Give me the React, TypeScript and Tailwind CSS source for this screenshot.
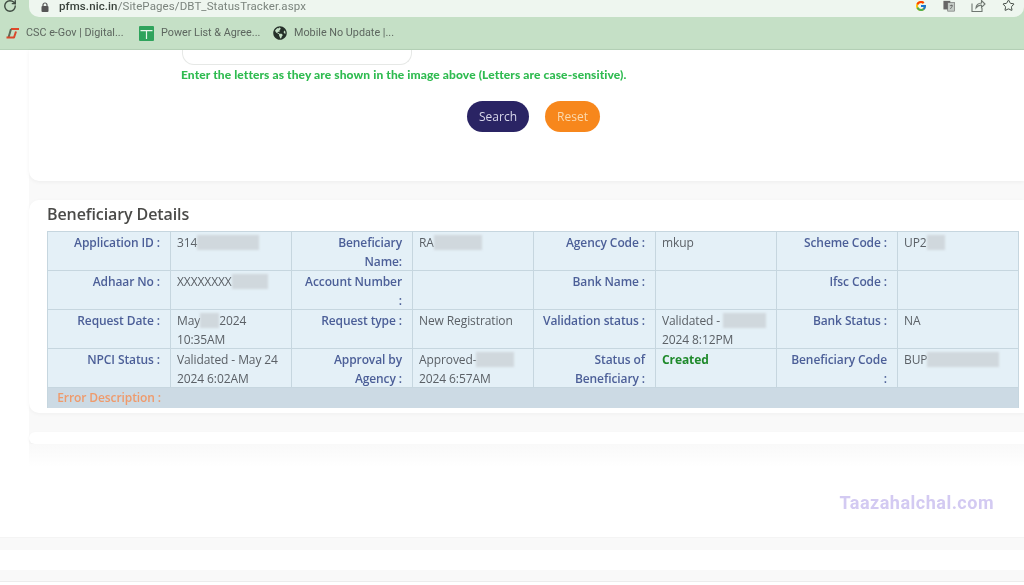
import React from "react";
import { RotateCw, Star } from "lucide-react";
import { FcGoogle } from "react-icons/fc";
import { FaGlobeAmericas } from "react-icons/fa";

const Blur = ({ w, tone = "bg-[#d0d8dd]" }: { w: string; tone?: string }) => (
  <span className={`inline-block h-[15px] align-[-3px] blur-[1px] ${w} ${tone}`} />
);

const Label = ({ children }: { children: React.ReactNode }) => (
  <div className="whitespace-nowrap border-r border-b border-[#c6d6df] bg-[#e4f0f7] pr-[10px] pt-[1px] text-right font-semibold text-[#4c5f98]">
    {children}
  </div>
);

const Value = ({ children, last }: { children?: React.ReactNode; last?: boolean }) => (
  <div className={`border-b border-[#c6d6df] bg-[#e4f0f7] pl-[6px] pt-[1px] text-[#5b6066] ${last ? "" : "border-r"}`}>
    {children}
  </div>
);

export default function App() {
  return (
    <div className="flex h-[585px] w-[1024px] flex-col overflow-hidden bg-white font-['Open_Sans',sans-serif] blur-[0.4px]">
      <header className="h-[50px] shrink-0 border-b border-[#b6d2b8] bg-[#c5e0c6]">
        <div className="flex h-[17px] items-center">
          <div className="flex w-[29px] justify-center pb-[6px] pr-[9px] text-[#3d4a40]">
            <RotateCw size={14} strokeWidth={2.4} />
          </div>
          <div className="flex h-[17px] flex-1 items-center rounded-b-[10px] bg-[#eef6ef] pl-[11px] pr-2">
            <svg width="10" height="11" viewBox="0 0 10 11" className="mb-[3px] shrink-0 text-[#555]">
              <rect x="1.5" y="4" width="7" height="6" rx="1" fill="currentColor" />
              <path d="M3 4V3a2 2 0 0 1 4 0v1" fill="none" stroke="currentColor" strokeWidth="1.2" />
            </svg>
            <span className="mb-[5px] ml-[9px] font-['Roboto',sans-serif] text-[11.500px] leading-[12px] tracking-[0.1px] text-[#7b847d]">
              <span className="font-medium text-[#39423b]">pfms.nic.in</span>/SitePages/DBT_StatusTracker.aspx
            </span>
            <div className="mb-[6px] ml-auto flex items-center gap-[16px] pr-[1px]">
              <FcGoogle size={12} />
              <svg width="12" height="12" viewBox="0 0 14 13" className="text-[#666]">
                <rect x="0.5" y="0.5" width="8" height="10" fill="currentColor" />
                <rect x="5.5" y="2.5" width="8" height="10" fill="#c4cbc6" stroke="currentColor" strokeWidth="0.7" />
                <path d="M8 6h3.5M10 5v1M8.5 10 11 6.5" stroke="#555" strokeWidth="0.8" fill="none" />
              </svg>
              <svg width="15" height="13" viewBox="0 0 15 13" fill="none" stroke="#6f7771" strokeWidth="1.1">
                <path d="M1 4.500v8h10V9" />
                <path d="M5 9c0-3 2.500-5 5.500-5V1.500L14 5l-3.500 3.500V6.200C8.500 6 6.500 7 5 9Z" />
              </svg>
              <Star size={13} strokeWidth={1.8} className="text-[#3f4741]" />
            </div>
          </div>
        </div>
        <div className="flex h-[32px] items-center pl-[5px] font-['Roboto',sans-serif] text-[10.800px] text-[#5d665f]">
          <svg width="15" height="14" viewBox="0 0 15 14" className="shrink-0" fill="none" strokeLinejoin="round">
            <path d="M6 3h8" stroke="#e0482a" strokeWidth="2" />
            <path d="M6 3 3.500 11.500" stroke="#5a6a58" strokeWidth="2" />
            <path d="M1.500 11.500h7.500L11 5.500" stroke="#d9472b" strokeWidth="2" />
          </svg>
          <span className="ml-[6px] w-[106px] truncate">CSC e-Gov | Digital...</span>
          <svg width="15" height="15" viewBox="0 0 15 15" className="ml-[7px] shrink-0">
            <rect width="15" height="15" rx="1" fill="#2fa35c" />
            <path d="M1.500 4.700h12M7.500 4.700V13" stroke="#e8f5ea" strokeWidth="1.200" />
          </svg>
          <span className="ml-[7px] w-[112px] truncate">Power List &amp; Agree...</span>
          <FaGlobeAmericas size={14} className="shrink-0 text-[#26302a]" />
          <span className="ml-[7px]">Mobile No Update |...</span>
        </div>
      </header>

      <main className="flex min-h-0 flex-1 flex-col bg-white pl-[29px]">
        <div className="flex flex-col bg-[#f9f9f9]">
          <section className="flex h-[131px] flex-col rounded-bl-[10px] bg-white shadow-[0_1px_4px_rgba(0,0,0,0.05)]">
            <div className="ml-[153px] h-[15px] w-[230px] rounded-b-[12px] border border-t-0 border-[#e6e8e6]" />
            <p className="ml-[152px] mt-[2px] font-['Lato',sans-serif] text-[12px] font-black leading-[15px] tracking-[0.1px] text-[#2fbb50]">
              Enter the letters as they are shown in the image above (Letters are case-sensitive).
            </p>
            <div className="ml-[438px] mt-[19px] flex gap-[16px] text-[12px] font-medium">
              <button className="flex h-[31px] w-[62px] items-center justify-center rounded-full bg-[#2a2464] pt-[1px] text-[#d8d7ea]">Search</button>
              <button className="flex h-[31px] w-[55px] items-center justify-center rounded-full bg-[#f7871c] pt-[1px] text-[#fbd9ad]">Reset</button>
            </div>
          </section>
          <section className="mt-[19px] h-[213px] rounded-l-[10px] bg-white pl-[18px] pr-[5px] shadow-[0_1px_4px_rgba(0,0,0,0.04)]">
            <h2 className="pt-[1px] pb-[3px] text-[16px] font-semibold leading-[27px] tracking-[-0.1px] text-[#4a4a48]">Beneficiary Details</h2>
            <div className="grid grid-cols-[123px_121px_121px_121px_122px_121px_121px_120px] grid-rows-[39px_39px_39px_39px_20px] border-t border-l border-r border-[#c6d6df] text-[12px] leading-[19px] tracking-[-0.1px]">
              <Label>Application ID :</Label>
              <Value>314<Blur w="w-[62px]" /></Value>
              <Label>Beneficiary<br />Name:</Label>
              <Value>RA<Blur w="w-[48px]" /></Value>
              <Label>Agency Code :</Label>
              <Value>mkup</Value>
              <Label>Scheme Code :</Label>
              <Value last>UP2<Blur w="w-[18px]" /></Value>

              <Label>Adhaar No :</Label>
              <Value>XXXXXXXX<Blur w="w-[36px]" /></Value>
              <Label>Account Number<br />:</Label>
              <Value />
              <Label>Bank Name :</Label>
              <Value />
              <Label>Ifsc Code :</Label>
              <Value last />

              <Label>Request Date :</Label>
              <Value>May<Blur w="w-[19px]" />2024 10:35AM</Value>
              <Label>Request type :</Label>
              <Value>New Registration</Value>
              <Label>Validation status :</Label>
              <Value>Validated - <Blur w="w-[43px]" /> 2024 8:12PM</Value>
              <Label>Bank Status :</Label>
              <Value last>NA</Value>

              <Label>NPCI Status :</Label>
              <Value>Validated - May 24 2024 6:02AM</Value>
              <Label>Approval by<br />Agency :</Label>
              <Value>Approved-<Blur w="w-[38px]" /> 2024 6:57AM</Value>
              <Label>Status of<br />Beneficiary :</Label>
              <Value><span className="font-bold text-[#1f8a2c]">Created</span></Value>
              <Label>Beneficiary Code<br />:</Label>
              <Value last>BUP<Blur w="w-[72px]" /></Value>

              <div className="col-span-8 bg-[#ccdae4]">
                <div className="w-[123px] pr-[10px] text-right font-semibold text-[#ef9a6b]">Error Description :</div>
              </div>
            </div>
          </section>
          <div className="mt-[19px] h-[12px] rounded-l-[8px] bg-white shadow-[0_1px_3px_rgba(0,0,0,0.05)]" />
        </div>
        <div className="relative h-[93px] bg-gradient-to-b from-[#f9f9f9] to-white to-[25%]">
          <span className="absolute right-[30px] top-[49px] font-['Roboto',sans-serif] text-[18px] font-bold leading-5 tracking-[0.5px] text-[#d3caf2]">
            Taazahalchal.com
          </span>
        </div>
        <div className="-ml-[29px] h-[13px] border-t border-[#f4f4f4] bg-[#f9f9f9]" />
        <div className="-ml-[29px] h-[20px] bg-white" />
        <div className="-ml-[29px] h-[11px] bg-[#f9f9f9]" />
        <div className="-ml-[29px] h-[4px] border-t border-[#ececec] bg-white" />
      </main>
    </div>
  );
}
